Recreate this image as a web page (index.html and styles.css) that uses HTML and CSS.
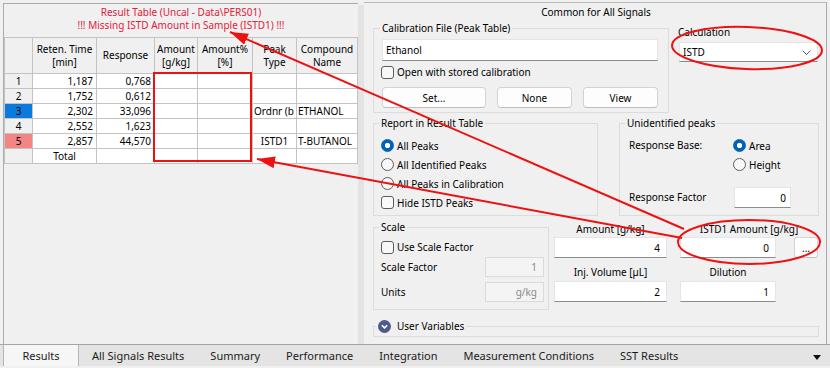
FILE: index.html
```html
<!DOCTYPE html>
<html lang="en">
<head>
    <meta charset="UTF-8">
    <meta name="viewport" content="width=device-width, initial-scale=1.0">
    <title>Results - Common for All Signals</title>
    <link rel="stylesheet" href="styles.css">
</head>
<body>

<div class="panes">
    <!-- Result table -->
    <div class="left-pane">
        <div class="result-title">
            <div>Result Table (Uncal - Data\PERS01)</div>
            <div>!!! Missing ISTD Amount in Sample (ISTD1) !!!</div>
        </div>
        <table class="result-table">
            <thead>
                <tr>
                    <th class="c-row"></th>
                    <th class="c-time">Reten. Time<br>[min]</th>
                    <th class="c-resp">Response</th>
                    <th class="c-amt">Amount<br>[g/kg]</th>
                    <th class="c-pct">Amount%<br>[%]</th>
                    <th class="c-type">Peak<br>Type</th>
                    <th class="c-name">Compound<br>Name</th>
                </tr>
            </thead>
            <tbody>
                <tr><td class="row-head">1</td><td class="num">1,187</td><td class="num">0,768</td><td></td><td></td><td></td><td></td></tr>
                <tr><td class="row-head">2</td><td class="num">1,752</td><td class="num">0,612</td><td></td><td></td><td></td><td></td></tr>
                <tr><td class="row-head blue">3</td><td class="num">2,302</td><td class="num">33,096</td><td></td><td></td><td class="text">Ordnr (b</td><td class="text">ETHANOL</td></tr>
                <tr><td class="row-head">4</td><td class="num">2,552</td><td class="num">1,623</td><td></td><td></td><td></td><td></td></tr>
                <tr><td class="row-head pink">5</td><td class="num">2,857</td><td class="num">44,570</td><td></td><td></td><td class="center">ISTD1</td><td class="text">T-BUTANOL</td></tr>
                <tr><td class="row-head"></td><td class="center">Total</td><td></td><td></td><td></td><td></td><td></td></tr>
            </tbody>
        </table>
    </div>

    <div class="scroll-strip"></div>

    <!-- Settings -->
    <div class="right-pane">
        <div class="common-title">Common for All Signals</div>

        <div class="row-top">
            <fieldset class="box calib">
                <legend>Calibration File (Peak Table)</legend>
                <input class="textbox left wide" type="text" value="Ethanol">
                <label class="option"><input type="checkbox"><span>Open with stored calibration</span></label>
                <div class="button-row">
                    <button class="btn btn-set">Set...</button>
                    <button class="btn">None</button>
                    <button class="btn">View</button>
                </div>
            </fieldset>
            <div class="calc">
                <div class="calc-label">Calculation</div>
                <div class="combo">
                    <span>ISTD</span>
                    <svg width="9" height="5" viewBox="0 0 9 5"><path d="M0.5 0.5 L4.5 4.5 L8.5 0.5" fill="none" stroke="#606060" stroke-width="1"/></svg>
                </div>
            </div>
        </div>

        <div class="row-mid">
            <fieldset class="box report">
                <legend>Report in Result Table</legend>
                <label class="option"><input type="radio" name="report" checked><span>All Peaks</span></label>
                <label class="option"><input type="radio" name="report"><span>All Identified Peaks</span></label>
                <label class="option"><input type="radio" name="report"><span>All Peaks in Calibration</span></label>
                <label class="option"><input type="checkbox"><span>Hide ISTD Peaks</span></label>
            </fieldset>
            <fieldset class="box unident">
                <legend>Unidentified peaks</legend>
                <div class="ub-row">
                    <div class="ub-label">Response Base:</div>
                    <div>
                        <label class="option"><input type="radio" name="base" checked><span>Area</span></label>
                        <label class="option"><input type="radio" name="base"><span>Height</span></label>
                    </div>
                </div>
                <div class="rf-row">
                    <div class="ub-label">Response Factor</div>
                    <input class="textbox" type="text" value="0">
                </div>
            </fieldset>
        </div>

        <div class="row-bottom">
            <fieldset class="box scale">
                <legend>Scale</legend>
                <label class="option"><input type="checkbox"><span>Use Scale Factor</span></label>
                <div class="field-row">
                    <div class="field-label">Scale Factor</div>
                    <input class="textbox disabled" type="text" value="1" disabled>
                </div>
                <div class="field-row">
                    <div class="field-label">Units</div>
                    <input class="textbox disabled" type="text" value="g/kg" disabled>
                </div>
            </fieldset>
            <div class="amounts">
                <div class="amt-label">Amount [g/kg]</div>
                <div class="amt-label span-2">ISTD1 Amount [g/kg]</div>
                <input class="textbox amt-input" type="text" value="4">
                <input class="textbox amt-input" type="text" value="0">
                <button class="btn dots">...</button>
                <div class="amt-label second">Inj. Volume [µL]</div>
                <div class="amt-label second">Dilution</div>
                <div></div>
                <input class="textbox amt-input second" type="text" value="2">
                <input class="textbox amt-input second" type="text" value="1">
            </div>
        </div>

        <!-- collapsed group -->
        <div class="user-vars">
            <div class="user-vars-title">
                <svg width="13" height="13" viewBox="0 0 13 13"><circle cx="6.5" cy="6.5" r="6.5" fill="#4e5a8a"/><path d="M3.8 5.2 L6.5 7.9 L9.2 5.2" fill="none" stroke="#fff" stroke-width="1.6"/></svg>
                <span>User Variables</span>
            </div>
        </div>
    </div>
</div>

<div class="tabs">
    <div class="tab active">Results</div>
    <div class="tab">All Signals Results</div>
    <div class="tab">Summary</div>
    <div class="tab">Performance</div>
    <div class="tab">Integration</div>
    <div class="tab">Measurement Conditions</div>
    <div class="tab">SST Results</div>
    <div class="tab-menu"></div>
</div>

<!-- red review markup drawn over the window -->
<svg class="annotations" width="830" height="368" viewBox="0 0 830 368">
    <defs>
        <marker id="arrow" viewBox="0 0 10 10" refX="10" refY="5" markerWidth="9" markerHeight="6" markerUnits="strokeWidth" orient="auto" preserveAspectRatio="none">
            <path d="M0 0 L10 5 L0 10 z" fill="#ee1111"/>
        </marker>
    </defs>
    <rect x="154" y="73" width="97" height="88" fill="none" stroke="#ee1111" stroke-width="2"/>
    <line x1="684" y1="229" x2="230" y2="32" stroke="#ee1111" stroke-width="2" marker-end="url(#arrow)"/>
    <line x1="682" y1="238" x2="257" y2="159" stroke="#ee1111" stroke-width="2" marker-end="url(#arrow)"/>
    <ellipse cx="747" cy="48" rx="75" ry="21" transform="rotate(2 747 48)" fill="none" stroke="#ee1111" stroke-width="2"/>
    <ellipse cx="749" cy="242" rx="71" ry="22" fill="none" stroke="#ee1111" stroke-width="2"/>
</svg>

</body>
</html>
```

FILE: styles.css
```css
* {
    box-sizing: border-box;
}

body {
    margin: 0;
    width: 830px;
    height: 368px;
    overflow: hidden;
    position: relative;
    background: #f0f0f0;
    font-family: "Noto Sans", sans-serif;
    font-size: 10px;
    color: #000;
}

.panes {
    display: flex;
    height: 344px;
}

/* Left: result table */
.left-pane {
    width: 355px;
    margin: 3px 0 0 3px;
    border-top: 1px solid #acacac;
    border-left: 1px solid #acacac;
}

.result-title {
    width: 354px;
    padding-top: 2px;
    color: #e3203a;
    text-align: center;
    line-height: 13px;
}

.result-table {
    width: 354px;
    margin-top: 5px;
    table-layout: fixed;
    border-spacing: 0;
    border-top: 1px solid #c3c3c3;
    border-left: 1px solid #c3c3c3;
}

.result-table th,
.result-table td {
    padding: 0;
    border-right: 1px solid #c3c3c3;
    border-bottom: 1px solid #c3c3c3;
    font-weight: normal;
    white-space: nowrap;
    overflow: hidden;
}

.result-table th {
    height: 36px;
    line-height: 13px;
    background: #f0f0f0;
}

.result-table td {
    height: 15px;
    line-height: 14px;
    background: #fff;
}

.c-row { width: 28px; }
.c-time { width: 64px; }
.c-resp { width: 58px; }
.c-amt { width: 43px; }
.c-pct { width: 55px; }
.c-type { width: 44px; }
.c-name { width: 61px; }

.result-table td.row-head {
    background: #f0f0f0;
    text-align: center;
}

.result-table td.blue { background: #0a7bdc; }
.result-table td.pink { background: #f38585; }

.result-table td.num {
    text-align: right;
    padding-right: 3px;
}

.result-table td.text { padding-left: 1px; }
.result-table td.center { text-align: center; }

.scroll-strip {
    width: 6px;
    margin-top: 5px;
    background: #e3e3e3;
}

/* Right: settings */
.right-pane {
    width: 463px;
    margin-top: 2px;
    padding: 0 7px 0 9px;
    border-top: 1px solid #b9b9b9;
    border-right: 1px solid #a3a9b5;
}

.common-title {
    padding-top: 2px;
    line-height: 14px;
    text-align: center;
}

fieldset.box {
    margin: 0;
    min-width: 0;
    border: 1px solid #dcdcdc;
}

legend {
    padding: 0 2px;
    margin-left: -2px;
    line-height: 14px;
}

.textbox {
    height: 21px;
    margin: 0;
    padding: 0 6px;
    border: 1px solid #e5e5e5;
    border-bottom-color: #8c8c8c;
    background: #fff;
    font: inherit;
    color: #000;
    text-align: right;
    outline: none;
}

.textbox.left {
    text-align: left;
    padding-left: 3px;
}

.textbox.disabled {
    background: #f4f4f4;
    border-color: #dadada;
    color: #8a8a8a;
}

.option {
    display: flex;
    align-items: center;
    gap: 3px;
    height: 19px;
}

input[type="checkbox"],
input[type="radio"] {
    appearance: none;
    flex: none;
    width: 13px;
    height: 13px;
    margin: 0;
    border: 1px solid #5c5c5c;
    background: #f8f8f8;
}

input[type="checkbox"] { border-radius: 3px; }
input[type="radio"] { border-radius: 50%; }

input[type="radio"]:checked {
    border-color: #0062b8;
    background: radial-gradient(circle, #fff 0 2.4px, #0062b8 3px);
}

.btn {
    width: 75px;
    height: 21px;
    margin-left: 11px;
    padding: 0;
    border: 1px solid #d3d3d3;
    border-bottom-color: #bfbfbf;
    border-radius: 4px;
    background: #fdfdfd;
    font: inherit;
    color: #000;
}

.row-top {
    display: flex;
    margin-top: 2px;
}

.calib {
    width: 296px;
    padding: 4px 9px 4px 8px;
}

.calib .wide {
    display: block;
    width: 276px;
    height: 22px;
}

.calib .option {
    height: 16px;
    margin: 3px 0 0 -1px;
}

.button-row {
    display: flex;
    margin-top: 7px;
}

.btn-set {
    width: 104px;
    margin-left: 0;
}

.calc {
    width: 141px;
    margin-left: 9px;
}

.calc-label {
    padding-top: 4px;
    line-height: 14px;
}

.combo {
    display: flex;
    align-items: center;
    justify-content: space-between;
    width: 139px;
    height: 20px;
    margin: 3px 0 0 1px;
    padding: 0 6px 0 3px;
    border: 1px solid #e5e5e5;
    border-bottom-color: #8c8c8c;
    background: #fff;
}

.row-mid {
    display: flex;
    gap: 21px;
    margin-top: 3px;
}

.report {
    width: 225px;
    padding: 6px 7px 3px 7px;
}

.unident {
    width: 200px;
    padding: 6px 9px 3px 9px;
}

.unident legend { margin-left: -4px; }

.ub-row { display: flex; }

.ub-label {
    width: 104px;
    line-height: 19px;
}

.rf-row {
    display: flex;
    align-items: center;
    margin-top: 13px;
}

.rf-row .textbox {
    width: 57px;
    margin-left: 1px;
    padding-right: 4px;
}

.row-bottom {
    display: flex;
    margin-top: 4px;
}

.scale {
    width: 176px;
    padding: 5px 4px 7px 7px;
}

.scale .option { height: 16px; }

.field-row {
    display: flex;
    align-items: center;
    margin-top: 2px;
}

.field-row + .field-row { margin-top: 5px; }

.field-label { width: 104px; }

.field-row .textbox {
    width: 59px;
    height: 20px;
}

.amounts {
    display: grid;
    grid-template-columns: 113px 96px 29px;
    column-gap: 13px;
    align-content: start;
    margin-left: 5px;
    padding-top: 2px;
}

.amt-label {
    line-height: 14px;
    text-align: center;
    white-space: nowrap;
}

.amt-label.span-2 { grid-column: span 2; }

.amt-label.second { margin-top: 7px; }

.amt-input { margin-top: 1px; }
.amt-input.second { margin-top: 2px; }

.dots {
    justify-self: end;
    width: 24px;
    height: 21px;
    margin: 1px 0 0;
    border-radius: 3px;
}

.user-vars {
    height: 11px;
    margin-top: 16px;
    border: 1px solid #dcdcdc;
}

.user-vars-title {
    display: inline-flex;
    align-items: center;
    gap: 6px;
    margin: -8px 0 0 2px;
    padding: 0 2px;
    line-height: 14px;
    background: #f0f0f0;
    vertical-align: top;
}

/* Bottom tab strip */
.tabs {
    display: flex;
    height: 22px;
    padding-left: 3px;
    border-top: 1px solid #a5a5a5;
    background: #e4e4e4;
}

.tab {
    padding: 0 13px;
    line-height: 21px;
    font-size: 11px;
    color: #1b1b1b;
    white-space: nowrap;
}

.tab.active {
    width: 76px;
    padding: 0;
    text-align: center;
    background: #f6f6f6;
    border-left: 1px solid #b5b5b5;
    border-right: 1px solid #b5b5b5;
}

.tab-menu {
    width: 0;
    height: 0;
    margin: 10px 9px 0 auto;
    border-left: 4.5px solid transparent;
    border-right: 4.5px solid transparent;
    border-top: 5px solid #111;
}

.annotations {
    position: absolute;
    left: 0;
    top: 0;
    pointer-events: none;
}
```
